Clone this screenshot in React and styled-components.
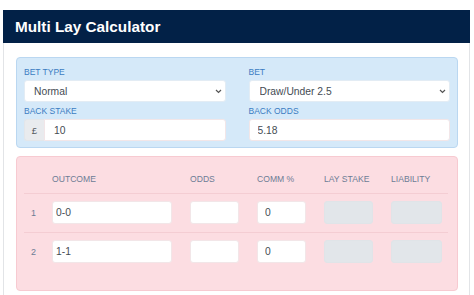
import React from "react";
import styled, { createGlobalStyle } from "styled-components";

const Global = createGlobalStyle`
  html, body { margin: 0; padding: 0; background: #fff; }
  body { font-family: "Liberation Sans", Arial, sans-serif; }
  * { box-sizing: border-box; }
`;

const Card = styled.div`
  margin: 10px 4px 0 3px;
  border-left: 1px solid #e2e4e7;
  border-right: 1px solid #e2e4e7;
  background: #fff;
`;

const Header = styled.div`
  height: 33px;
  background: #022147;
  display: flex;
  align-items: center;
  padding: 0 12px;
  margin: 0 -1px;
`;

const Title = styled.h1`
  margin: 0;
  font-size: 15.3px;
  font-weight: 700;
  color: #fff;
  letter-spacing: 0;
`;

const Body = styled.div`
  padding: 14px 11px 10px 12px;
  display: flex;
  flex-direction: column;
  gap: 8px;
`;

const InfoPanel = styled.div`
  background: #d5e9f9;
  border: 1px solid #bad7f1;
  border-radius: 4px;
  padding: 6px 7px;
  display: grid;
  grid-template-columns: 1fr 1fr;
  column-gap: 23px;
  row-gap: 1px;
`;

const Field = styled.div`
  display: flex;
  flex-direction: column;
`;

const Label = styled.label`
  font-size: 8.5px;
  line-height: 16px;
  height: 16px;
  color: #3a7cc2;
  text-transform: uppercase;
`;

const SelectWrap = styled.div`
  position: relative;
  height: 22px;
`;

const Select = styled.select`
  appearance: none;
  -webkit-appearance: none;
  width: 100%;
  height: 22px;
  border: 1px solid #e3ecf4;
  border-radius: 3px;
  background: #fff;
  font-family: inherit;
  font-size: 10.3px;
  color: #444b53;
  padding: 0 20px 0 ${(p) => p.$pad}px;
  outline: none;
`;

const Chevron = styled.svg`
  position: absolute;
  right: 4px;
  top: 9px;
  width: 7px;
  height: 5px;
  pointer-events: none;
`;

const Group = styled.div`
  display: flex;
  height: 22px;
`;

const Addon = styled.span`
  width: 20px;
  background: #e9ebee;
  border: 1px solid #e3e6ea;
  border-right: none;
  border-radius: 3px 0 0 3px;
  display: flex;
  align-items: center;
  justify-content: center;
  font-size: 9.5px;
  color: #50565c;
`;

const Input = styled.input`
  flex: 1;
  min-width: 0;
  width: 100%;
  height: ${(p) => p.$h || 22}px;
  border: 1px solid ${(p) => (p.readOnly ? "#e0e4e8" : "#f2e6e8")};
  border-radius: ${(p) => (p.$joined ? "0 3px 3px 0" : "3px")};
  background: ${(p) => (p.readOnly ? "#e2e6ea" : "#fff")};
  font-family: inherit;
  font-size: 10.3px;
  color: #454c53;
  padding: 0 0 0 ${(p) => p.$pad}px;
  outline: none;
`;

const DangerPanel = styled.div`
  background: #fcdde2;
  border: 1px solid #f7cad1;
  border-radius: 4px;
  padding: 7px 9px 19px 7px;
  display: flex;
  flex-direction: column;
`;

const Row = styled.div`
  display: grid;
  grid-template-columns: 10px 120px 49px 49px 49px 51px;
  column-gap: 18px;
  align-items: center;
  height: ${(p) => (p.$head ? 29 : 39)}px;
  border-top: ${(p) => (p.$head ? "none" : "1px solid #f4cdd3")};
  padding: ${(p) => (p.$head ? "0" : "7px 0 8px")};
`;

const HeadCell = styled.span`
  font-size: 8.6px;
  color: #6d7c95;
  text-transform: uppercase;
  white-space: nowrap;
`;

const Num = styled.span`
  font-size: 9px;
  color: #6d7c95;
  padding-left: 7px;
  white-space: nowrap;
`;

const Arrow = () => (
  <Chevron viewBox="0 0 7 5">
    <path d="M1 1 L3.5 3.5 L6 1" fill="none" stroke="#555" strokeWidth="1.2" />
  </Chevron>
);

const rows = [
  { n: 1, outcome: "0-0" },
  { n: 2, outcome: "1-1" },
];

export default function App() {
  return (
    <>
      <Global />
      <Card>
        <Header>
          <Title>Multi Lay Calculator</Title>
        </Header>
        <Body>
          <InfoPanel>
            <Field>
              <Label>Bet Type</Label>
              <SelectWrap>
                <Select $pad={9} defaultValue="Normal">
                  <option>Normal</option>
                </Select>
                <Arrow />
              </SelectWrap>
            </Field>
            <Field>
              <Label>Bet</Label>
              <SelectWrap>
                <Select $pad={10} defaultValue="Draw/Under 2.5">
                  <option>Draw/Under 2.5</option>
                </Select>
                <Arrow />
              </SelectWrap>
            </Field>
            <Field>
              <Label>Back Stake</Label>
              <Group>
                <Addon>£</Addon>
                <Input $joined $pad={9} defaultValue="10" />
              </Group>
            </Field>
            <Field>
              <Label>Back Odds</Label>
              <Group>
                <Input $pad={8} defaultValue="5.18" />
              </Group>
            </Field>
          </InfoPanel>
          <DangerPanel>
            <Row $head>
              <span />
              <HeadCell>Outcome</HeadCell>
              <HeadCell>Odds</HeadCell>
              <HeadCell>Comm %</HeadCell>
              <HeadCell>Lay Stake</HeadCell>
              <HeadCell>Liability</HeadCell>
            </Row>
            {rows.map((r) => (
              <Row key={r.n}>
                <Num>{r.n}</Num>
                <Input $h={23} $pad={3} defaultValue={r.outcome} />
                <Input $h={23} $pad={7} defaultValue="" />
                <Input $h={23} $pad={7} defaultValue="0" />
                <Input $h={23} $pad={7} readOnly defaultValue="" />
                <Input $h={23} $pad={7} readOnly defaultValue="" />
              </Row>
            ))}
          </DangerPanel>
        </Body>
      </Card>
    </>
  );
}
